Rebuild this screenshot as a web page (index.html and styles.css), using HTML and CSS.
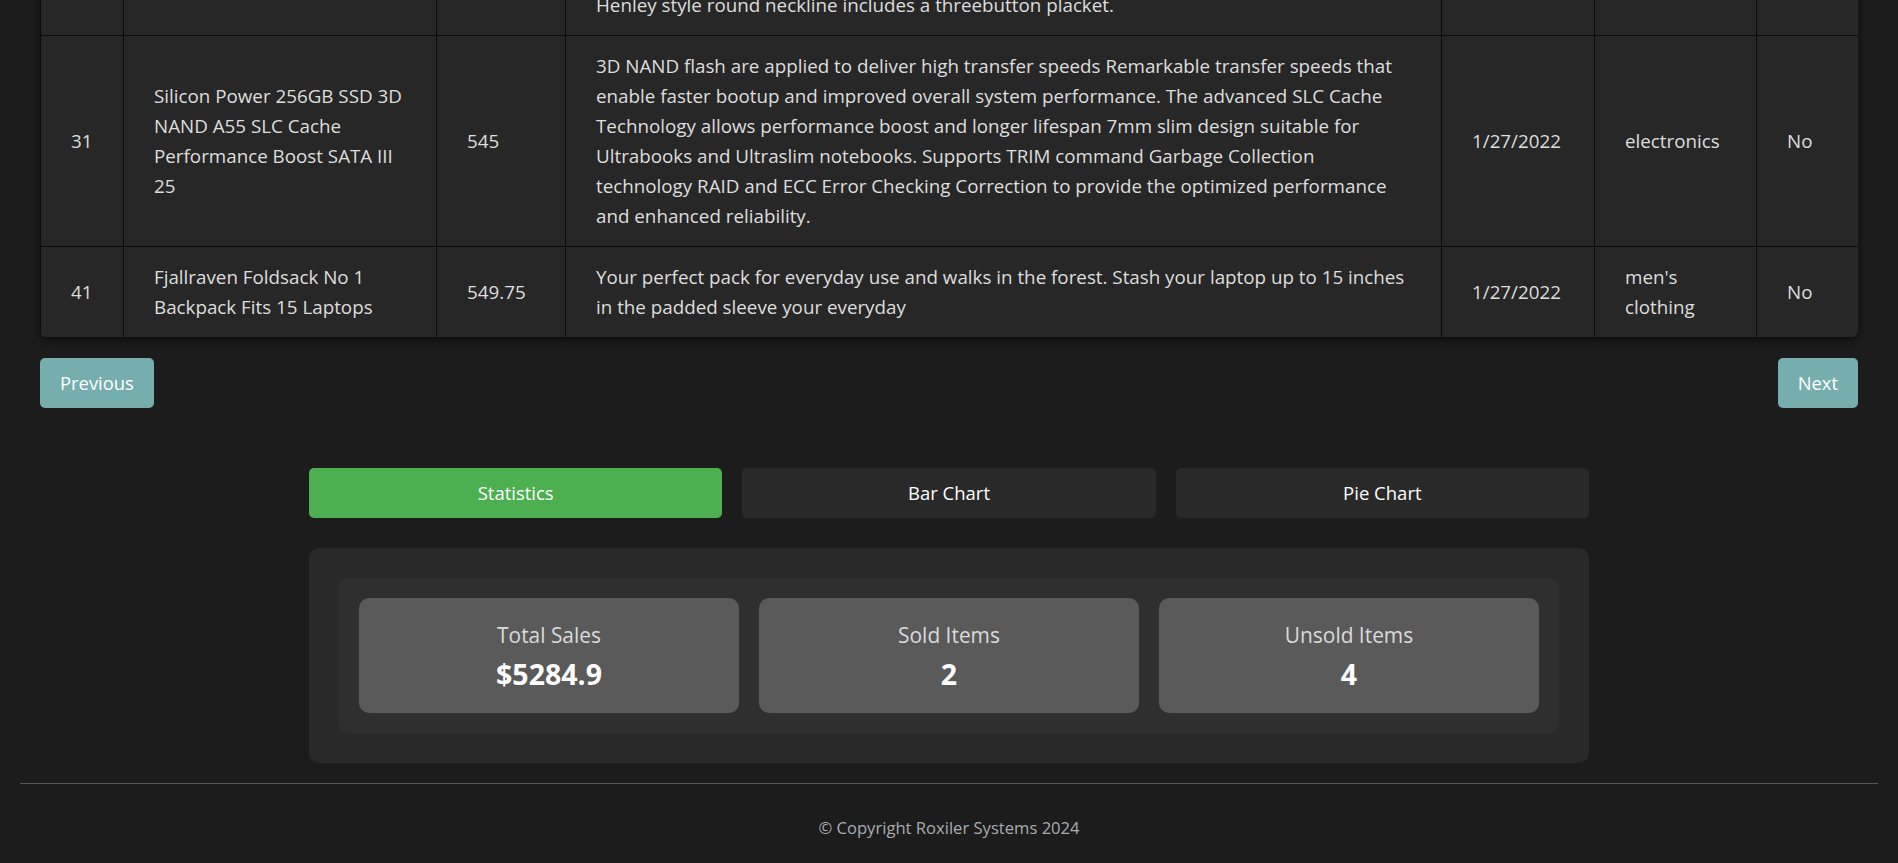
FILE: index.html
```html
<!DOCTYPE html>
<html lang="en">
<head>
<meta charset="utf-8">
<title>Transaction Dashboard</title>
<link rel="stylesheet" href="styles.css">
</head>
<body>
<div class="page">
  <header class="page-head">
    <h1 class="page-title">Transaction Dashboard</h1>
  </header>

  <section class="table-card">
    <table class="tx-table">
      <colgroup>
        <col class="c-id"><col class="c-title"><col class="c-price"><col class="c-desc"><col class="c-date"><col class="c-cat"><col class="c-sold">
      </colgroup>
      <thead>
        <tr><th>ID</th><th>Title</th><th>Price</th><th>Description</th><th>Date</th><th>Category</th><th>Sold</th></tr>
      </thead>
      <tbody>
        <tr>
          <td>22</td>
          <td>Mens Casual Premium Slim Fit TShirts</td>
          <td>2238.4</td>
          <td class="desc">Slimfitting style contrast raglan long sleeve threebutton henley placket light weight soft fabric for breathable and comfortable wearing. And Solid stitched shirts with round neck made for durability and a great fit for casual fashion wear and diehard baseball fans. The<br>Henley style round neckline includes a threebutton placket.</td>
          <td>1/27/2022</td>
          <td>men's clothing</td>
          <td>Yes</td>
        </tr>
        <tr>
          <td>31</td>
          <td class="title">Silicon Power 256GB SSD 3D NAND A55 SLC Cache Performance Boost SATA III 25</td>
          <td>545</td>
          <td class="desc">3D NAND flash are applied to deliver high transfer speeds Remarkable transfer speeds that enable faster bootup and improved overall system performance. The advanced SLC Cache Technology allows performance boost and longer lifespan 7mm slim design suitable for Ultrabooks and Ultraslim notebooks. Supports TRIM command Garbage Collection technology RAID and ECC Error Checking Correction to provide the optimized performance and enhanced reliability.</td>
          <td>1/27/2022</td>
          <td>electronics</td>
          <td>No</td>
        </tr>
        <tr>
          <td>41</td>
          <td class="title">Fjallraven Foldsack No 1 Backpack Fits 15 Laptops</td>
          <td>549.75</td>
          <td class="desc">Your perfect pack for everyday use and walks in the forest. Stash your laptop up to 15 inches in the padded sleeve your everyday</td>
          <td>1/27/2022</td>
          <td>men's clothing</td>
          <td>No</td>
        </tr>
      </tbody>
    </table>
  </section>

  <nav class="pager">
    <button class="pager-btn">Previous</button>
    <button class="pager-btn">Next</button>
  </nav>

  <section class="charts">
    <div class="tabs">
      <button class="tab tab-active">Statistics</button>
      <button class="tab">Bar Chart</button>
      <button class="tab">Pie Chart</button>
    </div>
    <div class="stats-panel">
      <div class="stats-inner">
        <div class="stat-card">
          <div class="stat-label">Total Sales</div>
          <div class="stat-value">$5284.9</div>
        </div>
        <div class="stat-card">
          <div class="stat-label">Sold Items</div>
          <div class="stat-value">2</div>
        </div>
        <div class="stat-card">
          <div class="stat-label">Unsold Items</div>
          <div class="stat-value">4</div>
        </div>
      </div>
    </div>
  </section>

  <footer class="site-footer">
    <p class="copyright">© Copyright Roxiler Systems 2024</p>
  </footer>
</div>
<script src="app.js"></script>
</body>
</html>
```

FILE: app.js
```js
window.scrollTo(0, document.documentElement.scrollHeight);
```

FILE: styles.css
```css
html { scrollbar-width: none; }
html::-webkit-scrollbar { display: none; }

body {
  margin: 0;
  background: #1c1c1c;
  color: #dedede;
  font-family: "Open Sans", "Noto Sans", sans-serif;
}

.page-head { padding: 30px 40px; text-align: center; }
.page-title { margin: 0; font-size: 32px; color: #fff; }

.table-card {
  margin: 0 40px;
  border-radius: 8px;
  overflow: hidden;
  background: #272727;
  box-shadow: 0 3px 8px rgba(0, 0, 0, 0.55);
}

.tx-table {
  width: 100%;
  border-collapse: collapse;
  table-layout: fixed;
  font-size: 18.8px;
  line-height: 30px;
}

.tx-table th,
.tx-table td {
  border: 1px solid #0c0c0c;
  padding: 15px 30px;
  text-align: left;
  vertical-align: middle;
  background: #272727;
}

.tx-table td.desc { padding-right: 31px; }
.tx-table td.title { padding-right: 27px; }

.tx-table th { color: #fff; font-weight: 600; }

.c-id { width: 83px; }
.c-title { width: 313px; }
.c-price { width: 129px; }
.c-desc { width: 876px; }
.c-date { width: 153px; }
.c-cat { width: 162px; }
.c-sold { width: 102px; }

.pager {
  display: flex;
  justify-content: space-between;
  margin: 20px 40px 0;
}

.pager-btn {
  font-family: inherit;
  font-size: 18.4px;
  line-height: 26px;
  padding: 12px 20px;
  border: 0;
  border-radius: 5px;
  background: #76adad;
  color: #fff;
}

.charts {
  width: 1280px;
  margin: 60px auto 0;
}

.tabs {
  display: grid;
  grid-template-columns: repeat(3, 1fr);
  gap: 20px;
}

.tab {
  font-family: inherit;
  font-size: 18.5px;
  line-height: 26px;
  padding: 12px 0;
  border: 0;
  border-radius: 5px;
  background: #292929;
  color: #fff;
}

.tab-active { background: #4caf50; }

.stats-panel {
  margin-top: 30px;
  padding: 30px;
  background: #292929;
  border-radius: 10px;
}

.stats-inner {
  display: grid;
  grid-template-columns: repeat(3, 1fr);
  gap: 20px;
  padding: 20px;
  background: #2f2f2f;
  border-radius: 9px;
}

.stat-card {
  display: flex;
  flex-direction: column;
  align-items: center;
  justify-content: center;
  height: 115px;
  background: #5a5a5a;
  border-radius: 10px;
}

.stat-label { font-size: 20.9px; line-height: 30px; color: #dadada; }
.stat-value { margin-top: 6px; font-size: 28.5px; line-height: 36px; font-weight: 700; color: #fff; }

.site-footer {
  margin: 20px 20px 0;
  border-top: 1px solid #52575c;
  padding: 33px 0 24px;
  text-align: center;
}

.copyright { margin: 0; font-size: 16.6px; line-height: 22px; color: #a9adb1; }
```
